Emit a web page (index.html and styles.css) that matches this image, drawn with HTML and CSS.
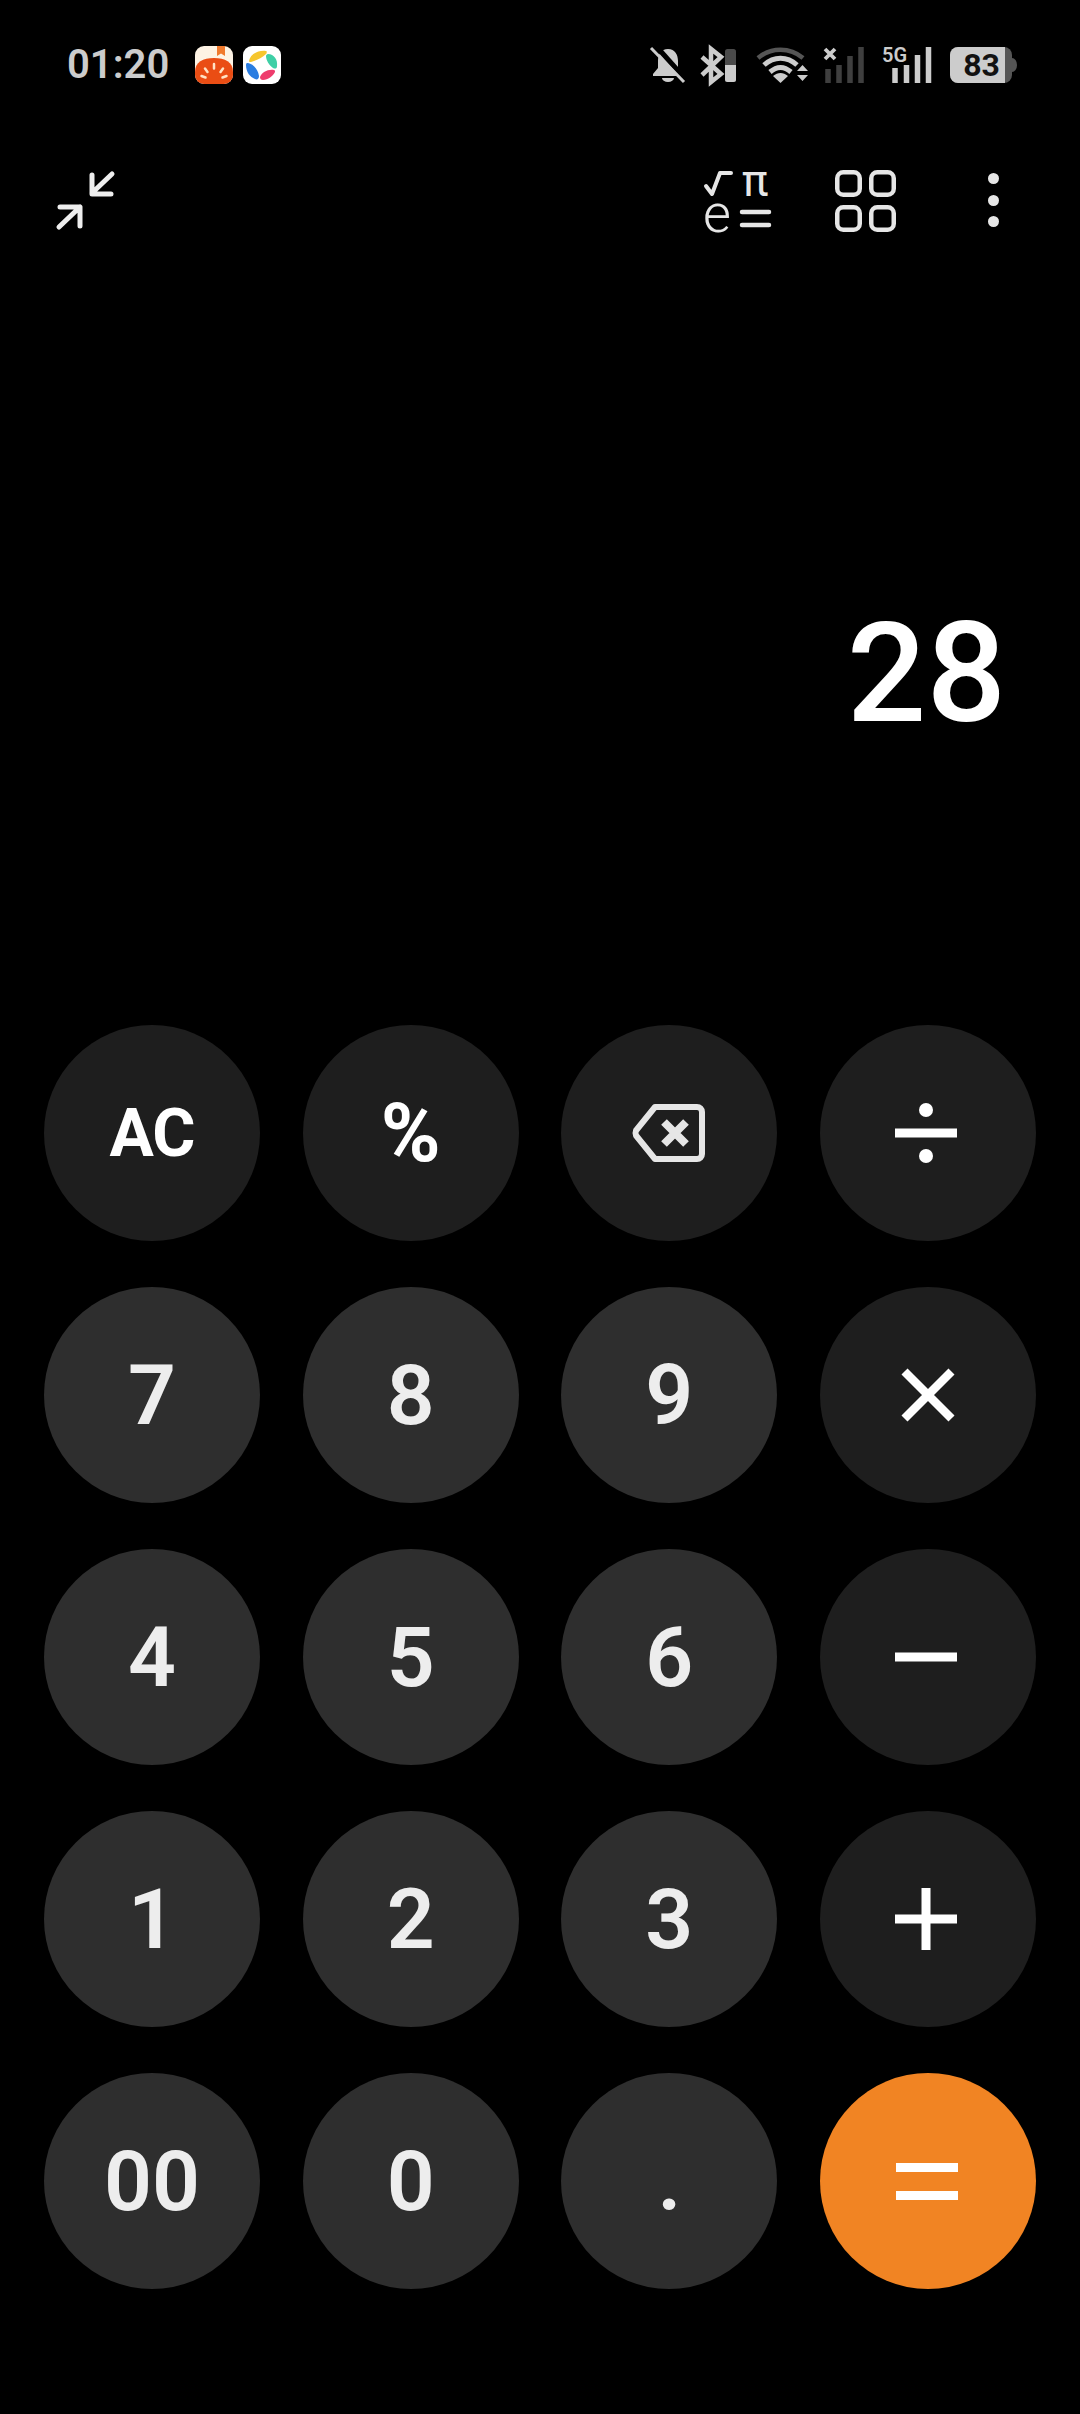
FILE: index.html
```html
<!DOCTYPE html>
<html lang="en">
<head>
<meta charset="utf-8">
<title>Calculator</title>
<link rel="stylesheet" href="styles.css">
</head>
<body>
<main class="app">
  <header class="status">
    <span class="time">01:20</span>
    <svg class="app-icon" viewBox="0 0 38 38">
      <rect width="38" height="38" rx="9" fill="#fdf3e4"/>
      <path d="M0 26C0 16 8 12 19 12S38 16 38 26V29A9 9 0 0 1 29 38H9A9 9 0 0 1 0 29Z" fill="#ea4d14"/>
      <path d="M22 0H30V10L26 7.500L22 10Z" fill="#f07a2d"/>
      <path d="M19 18V22.500M10 22.500L12.500 26M28 22.500L25.500 26M6.500 30L10.500 31.500M31.500 30L27.500 31.500" stroke="#ffe3c4" stroke-width="2.500" stroke-linecap="round"/>
    </svg>
    <svg class="app-icon app-icon-2" viewBox="0 0 38 38">
      <rect width="38" height="38" rx="9" fill="#fff"/>
      <path d="M6 15C7 9 14 4 23 5C24 5 24 7 23 8C19 12 12 15 8 16C7 16 6 16 6 15Z" fill="#f6c62e"/>
      <path d="M25 8C31 8 35 14 34 20C34 23 32 23 30 22C26 19 23 14 23 10C23 9 24 8 25 8Z" fill="#3ecfa6"/>
      <path d="M5 17C10 18 15 23 16 30C16 33 14 34 12 33C7 31 3 26 3 19C3 17 4 17 5 17Z" fill="#2a7de1"/>
      <path d="M17 31C19 26 25 23 31 24C32 24 32 25 32 26C30 30 25 34 20 34C18 34 17 33 17 31Z" fill="#ee3d6d"/>
    </svg>
    <div class="status-right">
      <svg class="s-bell" viewBox="0 0 36 36">
        <path d="M18 2C11 2 8 8 8 14V21L3 27V29H33V27L28 21V14C28 8 25 2 18 2Z" fill="#ccc"/>
        <path d="M12 31A6 4 0 0 0 24 31Z" fill="#ccc"/>
        <path d="M6 -1L38 35" stroke="#000" stroke-width="5"/>
        <path d="M1 1L34 35" stroke="#ccc" stroke-width="3"/>
      </svg>
      <svg class="s-bt" viewBox="0 0 38 36">
        <path d="M2 10L21 27L11 35V2L21 10L2 28" fill="none" stroke="#ccc" stroke-width="4.500"/>
        <rect x="25" y="2" width="11" height="33" rx="2.500" fill="#4a4a4a"/>
        <path d="M25 18H36V32.500A2.500 2.500 0 0 1 33.500 35H27.500A2.500 2.500 0 0 1 25 32.500Z" fill="#ccc"/>
      </svg>
      <svg class="s-wifi" viewBox="0 0 52 36">
        <path d="M2 11C15 0 34 0 47 11" fill="none" stroke="#555" stroke-width="4.500"/>
        <path d="M8 18C18 9 31 9 41 18" fill="none" stroke="#ccc" stroke-width="5"/>
        <path d="M14 25C21 19 28 19 35 25" fill="none" stroke="#ccc" stroke-width="5"/>
        <path d="M17 29C22 25 27 25 32 29L24.500 36Z" fill="#ccc"/>
        <path d="M41 24L46.500 18L52 24ZM41 28L52 28L46.500 34Z" fill="#ccc"/>
      </svg>
      <svg class="s-sim" viewBox="0 0 42 36">
        <path d="M2 2L12 12M12 2L2 12" stroke="#ccc" stroke-width="3.800"/>
        <path d="M5 22V36M16 18V36M27 9V36M38 0V36" stroke="#3f3f3f" stroke-width="5.500"/>
      </svg>
      <svg class="s-5g" viewBox="0 0 50 36">
        <text class="s-5g-text" x="0" y="15">5G</text>
        <path d="M13 21V36M24.500 18V36M35.500 8V36M46.500 0V36" stroke="#ccc" stroke-width="5.500"/>
      </svg>
      <svg class="s-batt" viewBox="0 0 68 36">
        <rect x="0" y="0" width="62" height="36" rx="8" fill="#555"/>
        <path d="M8 0H55V36H8A8 8 0 0 1 0 28V8A8 8 0 0 1 8 0Z" fill="#ccc"/>
        <path d="M62 11A5 7 0 0 1 62 25Z" fill="#555"/>
        <text class="s-batt-text" x="31.500" y="29">83</text>
      </svg>
    </div>
  </header>

  <nav class="toolbar">
    <svg class="t-collapse" viewBox="0 0 56 56">
      <path d="M54 2L34 21M34 3V22H53" fill="none" stroke="#eee" stroke-width="5" stroke-linecap="round" stroke-linejoin="round"/>
      <path d="M1 55L22 35M2 35H22V54" fill="none" stroke="#eee" stroke-width="5" stroke-linecap="round" stroke-linejoin="round"/>
    </svg>
    <div class="toolbar-right">
      <svg class="t-math" viewBox="0 0 68 64">
        <path d="M2 16L8 24L16 3H27" fill="none" stroke="#e6e6e6" stroke-width="4" stroke-linecap="round" stroke-linejoin="round"/>
        <text class="t-pi" x="38" y="26">π</text>
        <text class="t-e" x="-1" y="62">e</text>
        <path d="M38 42H65M38 55H65" stroke="#e6e6e6" stroke-width="4.500" stroke-linecap="round"/>
      </svg>
      <svg class="t-grid" viewBox="0 0 62 64">
        <rect x="2.250" y="2.250" width="22.500" height="22.500" rx="6"/>
        <rect x="36.250" y="2.250" width="22.500" height="22.500" rx="6"/>
        <rect x="2.250" y="37.250" width="22.500" height="22.500" rx="6"/>
        <rect x="36.250" y="37.250" width="22.500" height="22.500" rx="6"/>
      </svg>
      <div class="t-dots"><i></i><i></i><i></i></div>
    </div>
  </nav>

  <section class="display"><output class="value">28</output></section>

  <section class="keypad">
    <button class="key op txt">AC</button>
    <button class="key op txt pct">%</button>
    <button class="key op" aria-label="Backspace">
      <svg class="ic-back" viewBox="0 0 72 58">
        <path d="M22 3H64A5 5 0 0 1 69 8V50A5 5 0 0 1 64 55H22L3 31.500Q2 29 3 26.500Z" fill="none" stroke="#e6e6e6" stroke-width="6" stroke-linejoin="round"/>
        <path d="M31 18L53 40M53 18L31 40" stroke="#e6e6e6" stroke-width="8"/>
      </svg>
    </button>
    <button class="key op" aria-label="Divide">
      <svg class="ic-op ic-left" viewBox="0 0 62 62">
        <rect y="26.500" width="62" height="9"/><circle cx="31" cy="8" r="7"/><circle cx="31" cy="54" r="7"/>
      </svg>
    </button>
    <button class="key num">7</button>
    <button class="key num">8</button>
    <button class="key num">9</button>
    <button class="key op" aria-label="Multiply">
      <svg class="ic-op" viewBox="0 0 62 62">
        <path d="M7.500 7.500L54.500 54.500M54.500 7.500L7.500 54.500" stroke="#fff" stroke-width="8.500"/>
      </svg>
    </button>
    <button class="key num">4</button>
    <button class="key num">5</button>
    <button class="key num">6</button>
    <button class="key op" aria-label="Minus">
      <svg class="ic-op ic-left" viewBox="0 0 62 62"><rect y="26.500" width="62" height="9"/></svg>
    </button>
    <button class="key num">1</button>
    <button class="key num">2</button>
    <button class="key num">3</button>
    <button class="key op" aria-label="Plus">
      <svg class="ic-op ic-left" viewBox="0 0 62 62"><rect y="26.500" width="62" height="9"/><rect x="26.500" width="9" height="62"/></svg>
    </button>
    <button class="key num">00</button>
    <button class="key num">0</button>
    <button class="key num">.</button>
    <button class="key eq" aria-label="Equals">
      <svg class="ic-op ic-eq" viewBox="0 0 62 62"><rect y="13" width="62" height="9"/><rect y="41" width="62" height="9"/></svg>
    </button>
  </section>
</main>
</body>
</html>
```
FILE: styles.css
```css
* { box-sizing: border-box; }
html, body { margin: 0; background: #000; }
.app {
  width: 1080px;
  height: 2414px;
  display: flex;
  flex-direction: column;
  background: #000;
  font-family: Roboto, "Liberation Sans", sans-serif;
  overflow: hidden;
}
svg { display: block; flex: none; overflow: visible; }

/* status bar */
.status {
  height: 130px;
  display: flex;
  align-items: center;
  padding: 0 62px 0 67px;
}
.time { font-size: 40px; font-weight: 600; color: #ccc; line-height: 1; width: 128px; }
.app-icon { width: 38px; height: 38px; }
.app-icon-2 { margin-left: 10px; }
.status-right { margin-left: auto; display: flex; align-items: center; }
.s-bell { width: 36px; height: 36px; }
.s-bt { width: 38px; height: 36px; margin-left: 14px; }
.s-wifi { width: 52px; height: 36px; margin-left: 18px; }
.s-sim { width: 42px; height: 36px; margin-left: 15px; }
.s-5g { width: 50px; height: 36px; margin-left: 17px; }
.s-batt { width: 68px; height: 36px; margin-left: 18px; }
.s-5g-text { font: 600 20px Roboto, sans-serif; fill: #ccc; }
.s-batt-text { font: 700 32px Roboto, sans-serif; fill: #111; text-anchor: middle; }

/* toolbar */
.toolbar {
  height: 140px;
  display: flex;
  align-items: center;
  justify-content: space-between;
  padding: 0 81px 0 58px;
}
.t-collapse { width: 56px; height: 56px; }
.toolbar-right { display: flex; align-items: center; }
.t-math { width: 68px; height: 64px; margin-top: 4px; }
.t-pi { font: 400 44px Roboto, sans-serif; fill: #e6e6e6; }
.t-e { font: 300 54px Roboto, sans-serif; fill: #e6e6e6; }
.t-grid { width: 62px; height: 64px; margin: 4px 0 0 63px; fill: none; stroke: #e6e6e6; stroke-width: 4.500; }
.t-dots { display: flex; flex-direction: column; gap: 10.500px; margin-left: 91px; }
.t-dots i { display: block; width: 11px; height: 11px; border-radius: 50%; background: #e6e6e6; }

/* result */
.display {
  flex: 1;
  display: flex;
  justify-content: flex-end;
  padding: 301px 74px 0 0;
}
.value { font-size: 140px; font-weight: 500; line-height: 204px; color: #fff; }

/* keys */
.keypad {
  display: grid;
  grid-template-columns: repeat(4, 216px);
  grid-auto-rows: 216px;
  column-gap: 42.670px;
  row-gap: 46px;
  padding: 0 0 125px 44px;
}
.key {
  border: 0;
  padding: 0;
  border-radius: 50%;
  display: flex;
  align-items: center;
  justify-content: center;
  font-family: inherit;
}
.num { background: #2e2e2e; color: #ededed; font-size: 84px; font-weight: 600; }
.op { background: #1e1e1e; color: #fff; }
.eq { background: #f18423; }
.txt { font-size: 66px; font-weight: 700; letter-spacing: -1px; }
.pct { font-size: 81px; letter-spacing: 0; }
.ic-back { width: 72px; height: 58px; margin-top: -1px; }
.ic-op { width: 62px; height: 62px; fill: #fff; }
.ic-left { margin-right: 3px; }
.ic-eq { margin-right: 1px; }
```
